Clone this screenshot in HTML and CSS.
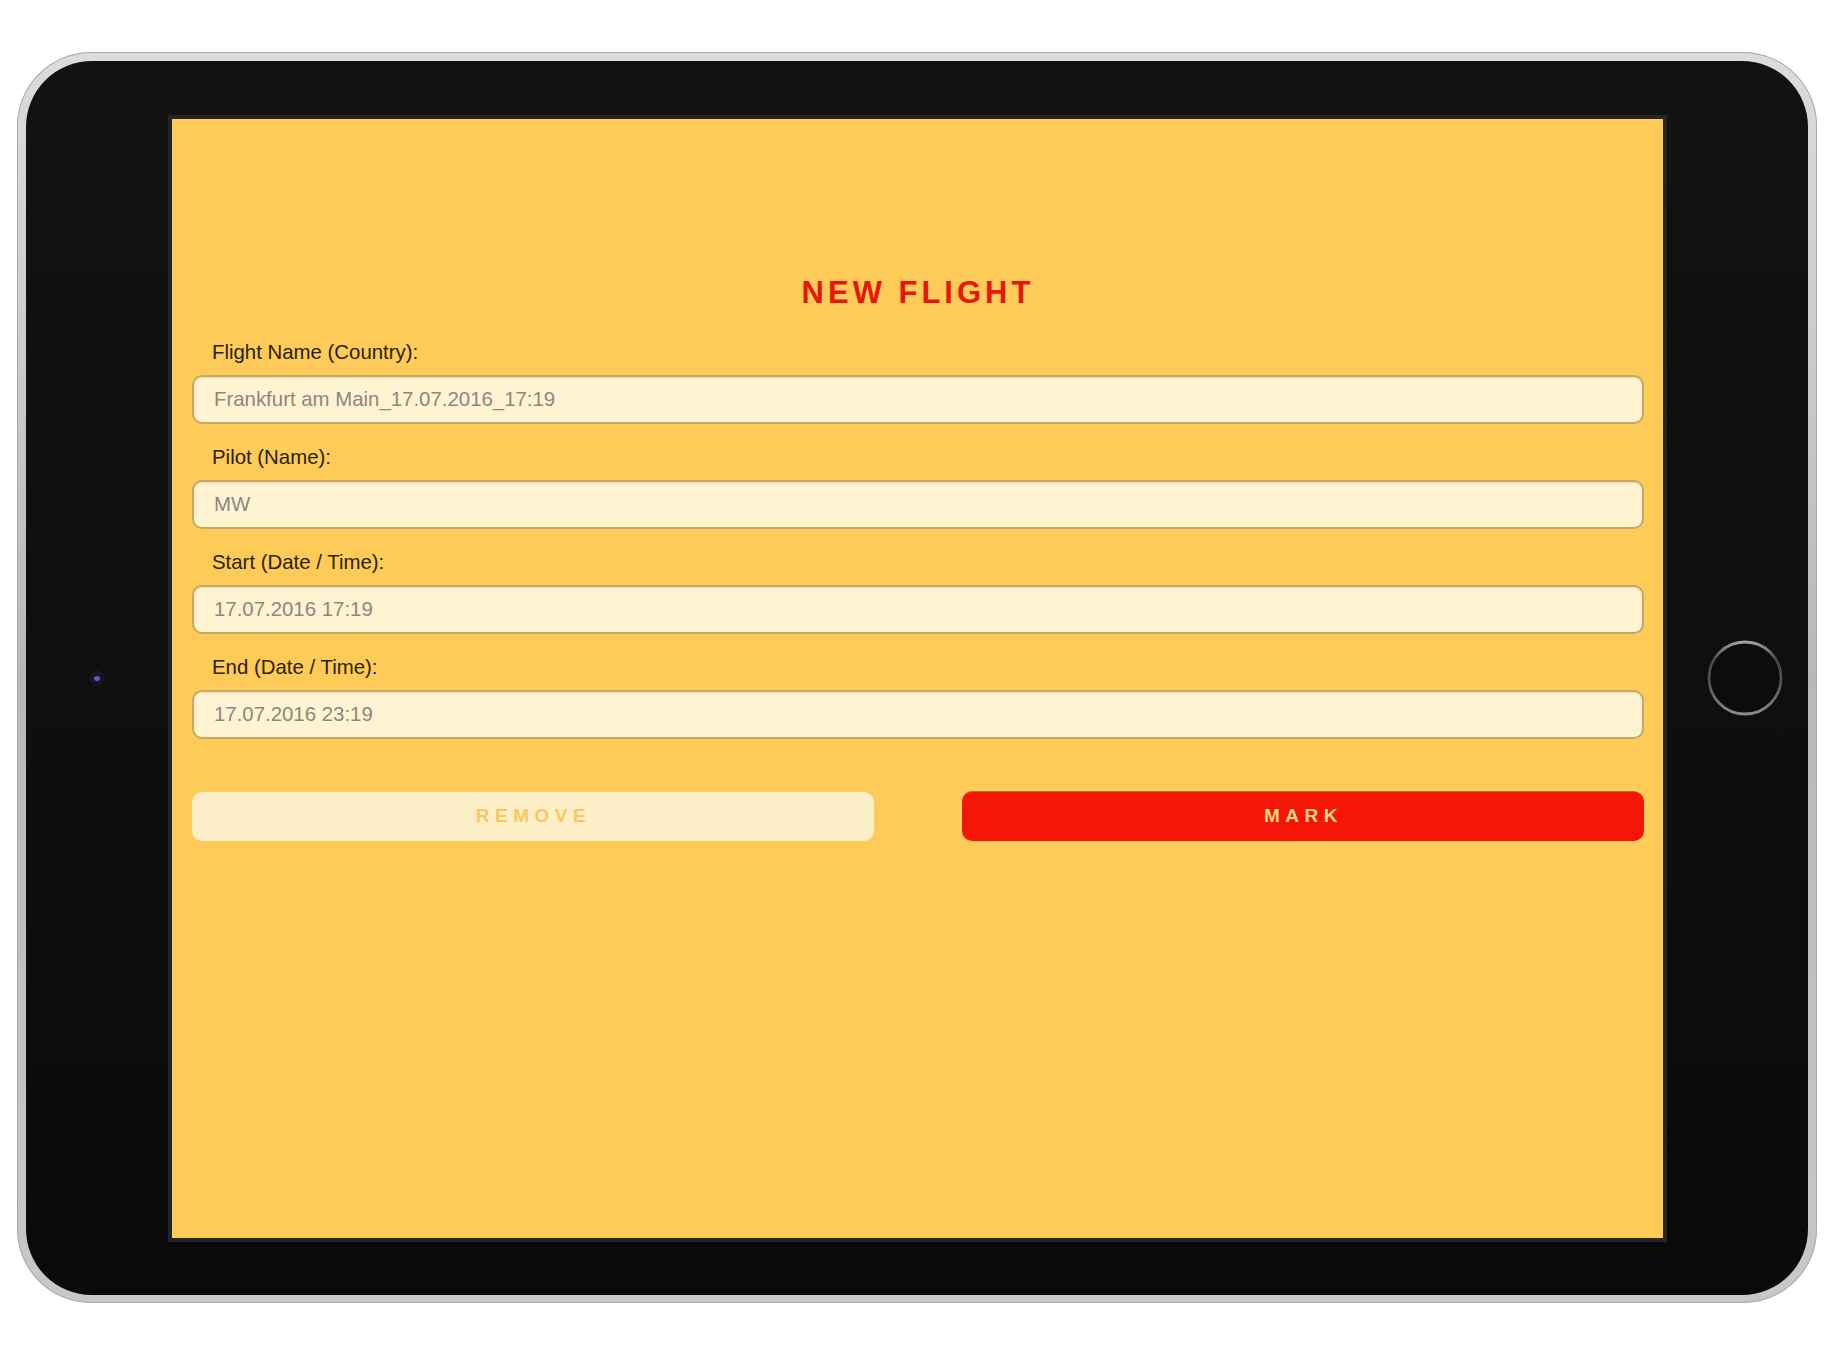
FILE: index.html
```html
<!DOCTYPE html>
<html lang="en">
<head>
<meta charset="utf-8">
<title>New Flight</title>
<link rel="stylesheet" href="styles.css">
</head>
<body>
<div class="stage">
  <div class="device">
    <div class="bezel">
      <div class="side side-left">
        <div class="camera"><div class="lens"></div></div>
      </div>
      <div class="screen">
        <h1 class="title">NEW FLIGHT</h1>
        <form class="form">
          <div class="field">
            <label class="label">Flight Name (Country):</label>
            <div class="input">Frankfurt am Main_17.07.2016_17:19</div>
          </div>
          <div class="field">
            <label class="label">Pilot (Name):</label>
            <div class="input">MW</div>
          </div>
          <div class="field">
            <label class="label">Start (Date / Time):</label>
            <div class="input">17.07.2016 17:19</div>
          </div>
          <div class="field">
            <label class="label">End (Date / Time):</label>
            <div class="input">17.07.2016 23:19</div>
          </div>
          <div class="buttons">
            <div class="btn btn-remove">REMOVE</div>
            <div class="btn btn-mark">MARK</div>
          </div>
        </form>
      </div>
      <div class="side side-right">
        <svg class="home" width="78" height="78" viewBox="0 0 78 78">
          <defs>
            <linearGradient id="ring" x1="0" y1="0" x2="0" y2="1">
              <stop offset="0" stop-color="#a0a0a0"/>
              <stop offset="0.25" stop-color="#444444"/>
              <stop offset="0.6" stop-color="#555555"/>
              <stop offset="1" stop-color="#8a8a8a"/>
            </linearGradient>
          </defs>
          <circle cx="39" cy="39" r="36" fill="#0c0c0c" stroke="url(#ring)" stroke-width="2.8"/>
        </svg>
      </div>
    </div>
  </div>
</div>
</body>
</html>
```

FILE: styles.css
```css
html, body {
  margin: 0;
  padding: 0;
  background: #ffffff;
}

.stage {
  width: 1836px;
  height: 1362px;
  padding: 52px 0 0 17px;
  box-sizing: border-box;
}

.device {
  width: 1800px;
  height: 1251px;
  box-sizing: border-box;
  padding: 9px 9px 8px 9px;
  border-radius: 74px;
  background: linear-gradient(180deg, #dcdcdc 0%, #b8b8b8 50%, #c8c8c8 100%);
  box-shadow: inset 0 0 0 1px #a9a9a9;
}

.bezel {
  width: 100%;
  height: 100%;
  border-radius: 66px;
  background: linear-gradient(180deg, #121212 0%, #0e0e0e 60%, #0a0a0a 100%);
  display: flex;
  align-items: center;
}

.side {
  height: 100%;
  display: flex;
  align-items: center;
}

.side-left {
  width: 142px;
  justify-content: center;
}

.side-right {
  width: 141px;
  padding-left: 39px;
  box-sizing: border-box;
}

.camera {
  width: 16px;
  height: 16px;
  border-radius: 50%;
  background: #16161f;
  display: flex;
  align-items: center;
  justify-content: center;
}

.lens {
  width: 6px;
  height: 5px;
  border-radius: 50%;
  background: #5a5ad0;
}

.home {
  display: block;
}

.screen {
  width: 1499px;
  height: 1127px;
  box-sizing: border-box;
  border: 4px solid #242424;
  background: #fecb59;
  padding: 156px 19px 0 20px;
  font-family: "Liberation Sans", Arial, sans-serif;
}

.title {
  margin: 0;
  text-align: center;
  font-size: 31px;
  line-height: 36px;
  font-weight: bold;
  letter-spacing: 4px;
  color: #e5170b;
}

.form {
  margin: 29px 0 0 0;
  display: flex;
  flex-direction: column;
}

.field {
  display: flex;
  flex-direction: column;
  margin-bottom: 21px;
}

.label {
  display: block;
  font-size: 20.4px;
  line-height: 24px;
  color: #2a2200;
  padding-left: 20px;
  margin-bottom: 11px;
}

.input {
  height: 49px;
  box-sizing: border-box;
  border: 2px solid #c4a866;
  border-radius: 10px;
  background: #fff4d2;
  padding: 0 20px;
  font-size: 20.4px;
  line-height: 45px;
  color: #89887f;
  box-shadow: inset 0 1px 2px rgba(120, 90, 20, 0.15);
}

.buttons {
  margin-top: 32px;
  display: grid;
  grid-template-columns: 1fr 1fr;
  column-gap: 88px;
}

.btn {
  height: 49px;
  border-radius: 10px;
  display: flex;
  align-items: center;
  justify-content: center;
  font-size: 19px;
  font-weight: bold;
  letter-spacing: 5.5px;
  padding-left: 1px;
}

.btn-remove {
  background: #fcefc8;
  color: #f6c95d;
}

.btn-mark {
  background: #f5160a;
  color: #fad67f;
  box-shadow: 0 -1px 0 #c96a12;
}
```
